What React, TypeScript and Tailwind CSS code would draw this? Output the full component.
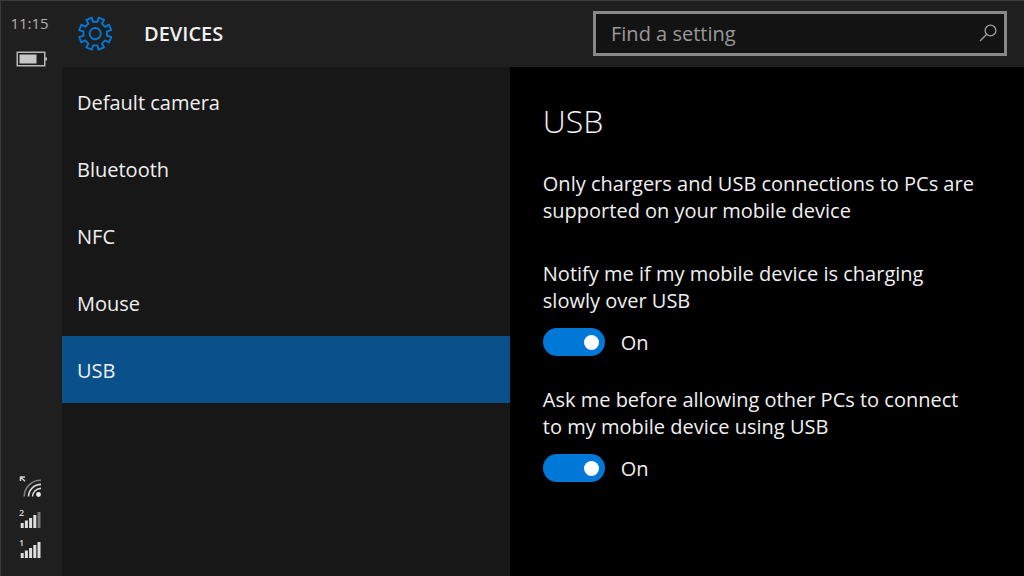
import { useState } from "react";

const categories = ["Default camera", "Bluetooth", "NFC", "Mouse", "USB"];

// radius and angle (degrees) of the corners of one gear tooth
const toothCorners = [
  [12, 11],
  [16.4, 12],
  [16.4, 33],
  [12, 34],
];

// Outline of an eight-toothed gear, with a gap between teeth at the top
function gearPath(cx: number, cy: number) {
  const points: string[] = [];
  for (let tooth = 0; tooth < 8; tooth++) {
    toothCorners.forEach(([radius, angle]) => {
      const rad = ((tooth * 45 + angle) * Math.PI) / 180;
      points.push(
        `${(cx + radius * Math.sin(rad)).toFixed(2)} ${(cy - radius * Math.cos(rad)).toFixed(2)}`
      );
    });
  }
  return `M${points.join("L")}Z`;
}

function GearIcon() {
  return (
    <svg
      className="h-9 w-9 shrink-0 text-[#0078d7]"
      viewBox="0 0 36 36"
      fill="none"
      stroke="currentColor"
      strokeWidth="1.9"
      strokeLinejoin="round"
      aria-hidden="true"
    >
      <path d={gearPath(18.2, 18.6)} />
      <circle cx="18.2" cy="18.6" r="5.6" />
    </svg>
  );
}

function BatteryIcon() {
  return (
    <svg className="h-4 w-8" viewBox="0 0 32 16" role="img" aria-label="Battery">
      <rect x="1.25" y="1.25" width="27.5" height="13.5" fill="none" stroke="#b8b8b8" strokeWidth="1.5" />
      <rect x="3.5" y="3.5" width="17" height="9" fill="#c8c8c8" />
      <rect x="29" y="6.5" width="2" height="3" fill="#b8b8b8" />
    </svg>
  );
}

function WifiIcon() {
  return (
    <svg className="h-6 w-6" viewBox="0 0 24 24" fill="none" role="img" aria-label="Wi-Fi">
      <path d="M1.5 5V1H6M1.8 1.2 6 5.2" stroke="#cfcfcf" strokeWidth="1.5" />
      <path d="M5.2 20.5A16.5 16.5 0 0 1 22 4.2" stroke="#808080" strokeWidth="1.6" />
      <path d="M9.5 20.5A12.5 12.5 0 0 1 22 8.4" stroke="#d8d8d8" strokeWidth="1.6" />
      <path d="M13.5 20.5A8.5 8.5 0 0 1 22 12.4" stroke="#d8d8d8" strokeWidth="1.6" />
      <circle cx="19.5" cy="18.5" r="2.4" fill="#f0f0f0" />
    </svg>
  );
}

function SignalIcon({ sim, bars }: { sim: number; bars: number }) {
  const heights = [5, 7.5, 10, 13, 16];
  return (
    <svg className="h-6 w-6 overflow-visible" viewBox="0 0 24 24" role="img" aria-label={`SIM ${sim} signal`}>
      <text x="0" y="10" fontSize="9" fontWeight="600" fill="#d8d8d8">
        {sim}
      </text>
      {heights.map((h, i) => (
        <rect key={h} x={1.7 + i * 4.2} y={22 - h} width="3" height={h} fill={i < bars ? "#dedede" : "#777"} />
      ))}
    </svg>
  );
}

function SearchIcon() {
  return (
    <svg
      className="mr-1.5 h-5 w-5 shrink-0"
      viewBox="0 0 20 20"
      fill="none"
      stroke="#a0a0a0"
      strokeWidth="1.3"
      aria-hidden="true"
    >
      <circle cx="12.5" cy="7.5" r="5.4" />
      <path d="M8.7 11.3 2 18" />
    </svg>
  );
}

interface ToggleProps {
  label: string;
  checked: boolean;
  onChange: (checked: boolean) => void;
}

function Toggle({ label, checked, onChange }: ToggleProps) {
  return (
    <label className="block max-w-[434px]">
      <span className="block">{label}</span>
      <span className="mt-3.5 flex items-center gap-4">
        <input
          type="checkbox"
          role="switch"
          checked={checked}
          onChange={(e) => onChange(e.target.checked)}
          className="flex h-7 w-[62px] appearance-none items-center rounded-full bg-[#555] px-[6px] before:h-[15px] before:w-[15px] before:rounded-full before:bg-white checked:justify-end checked:bg-[#0078d7]"
        />
        <span>{checked ? "On" : "Off"}</span>
      </span>
    </label>
  );
}

export default function App() {
  const [selected, setSelected] = useState("USB");
  const [notify, setNotify] = useState(true);
  const [ask, setAsk] = useState(true);

  return (
    <div className="flex min-h-screen border-t border-l border-[#3a3a3a] bg-[#1f1f1f] font-['Open_Sans','Noto_Sans',sans-serif] text-xl leading-[27px] text-[#f0f0f0]">
      <aside className="flex w-[61px] shrink-0 flex-col items-center justify-between pt-2 pb-4">
        <div className="flex flex-col items-center gap-3.5">
          <time className="pr-1 text-[15px] leading-7 text-[#b0b0b0]">11:15</time>
          <BatteryIcon />
        </div>
        <div className="flex flex-col gap-1.5 pr-0.5">
          <WifiIcon />
          <SignalIcon sim={2} bars={4} />
          <SignalIcon sim={1} bars={5} />
        </div>
      </aside>

      <div className="flex min-w-0 flex-1 flex-col">
        <header className="flex h-[66px] shrink-0 items-center justify-between gap-4 pr-[17px] pb-0.5 pl-[15px]">
          <div className="flex items-center gap-[31px]">
            <GearIcon />
            <h1 className="font-semibold">DEVICES</h1>
          </div>
          <div className="flex h-[45px] w-full max-w-[414px] items-center border-3 border-[#888] bg-[#131313]">
            <input
              type="search"
              aria-label="Find a setting"
              placeholder="Find a setting"
              className="min-w-0 flex-1 bg-transparent px-[15px] outline-none placeholder:text-[#999]"
            />
            <SearchIcon />
          </div>
        </header>

        <div className="grid flex-1 grid-cols-[27fr_31fr]">
          <nav className="flex flex-col bg-[#171717] pt-px">
            {categories.map((name) => (
              <button
                key={name}
                type="button"
                onClick={() => setSelected(name)}
                aria-current={name === selected ? "page" : undefined}
                className={`h-[67px] px-[15px] pt-0.5 text-left ${name === selected ? "bg-[#0a518b]" : ""}`}
              >
                {name}
              </button>
            ))}
          </nav>

          <main className="flex flex-col bg-black px-[33px] pt-8">
            <h2 className="text-[32px] leading-11 font-light">USB</h2>
            <p className="mt-[27px] max-w-[434px]">
              Only chargers and USB connections to PCs are supported on your mobile device
            </p>
            <div className="mt-9 flex flex-col gap-[30px]">
              <Toggle
                label="Notify me if my mobile device is charging slowly over USB"
                checked={notify}
                onChange={setNotify}
              />
              <Toggle
                label="Ask me before allowing other PCs to connect to my mobile device using USB"
                checked={ask}
                onChange={setAsk}
              />
            </div>
          </main>
        </div>
      </div>
    </div>
  );
}
